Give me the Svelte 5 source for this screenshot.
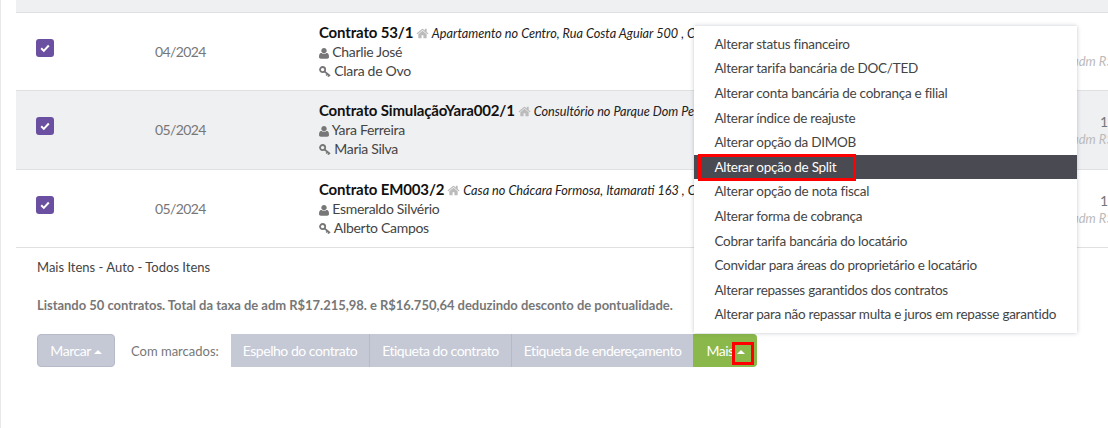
<script lang="ts">
	const rows = [
		{ date: '04/2024', title: 'Contrato 53/1', place: 'Apartamento no Centro, Rua Costa Aguiar 500 , Centro', owner: 'Charlie José', tenant: 'Clara de Ovo', value: '' },
		{ date: '05/2024', title: 'Contrato SimulaçãoYara002/1', place: 'Consultório no Parque Dom Pedro II, Rua das Flores 20 , Centro', owner: 'Yara Ferreira', tenant: 'Maria Silva', value: '1' },
		{ date: '05/2024', title: 'Contrato EM003/2', place: 'Casa no Chácara Formosa, Itamarati 163 , Centro', owner: 'Esmeraldo Silvério', tenant: 'Alberto Campos', value: '1' }
	];

	const actions = ['Espelho do contrato', 'Etiqueta do contrato', 'Etiqueta de endereçamento'];

	const menu = [
		'Alterar status financeiro',
		'Alterar tarifa bancária de DOC/TED',
		'Alterar conta bancária de cobrança e filial',
		'Alterar índice de reajuste',
		'Alterar opção da DIMOB',
		'Alterar opção de Split',
		'Alterar opção de nota fiscal',
		'Alterar forma de cobrança',
		'Cobrar tarifa bancária do locatário',
		'Convidar para áreas do proprietário e locatário',
		'Alterar repasses garantidos dos contratos',
		'Alterar para não repassar multa e juros em repasse garantido'
	];
</script>

<div class="page">
	<div class="strip"></div>

	{#each rows as row, i}
		<div class="row" class:alt={i === 1}>
			<div class="check">
				<svg viewBox="0 0 18 18" width="18" height="18">
					<rect width="18" height="18" rx="3" fill="#6b4fa0" />
					<path d="M5.2 9.3l2.6 2.6 5-5.4" fill="none" stroke="#fff" stroke-width="2" />
				</svg>
			</div>
			<div class="date">{row.date}</div>
			<div class="info">
				<div class="title">
					<b>{row.title}</b>
					<svg class="home" viewBox="0 0 1792 1792" width="13" height="13">
						<path d="M1472 992v480q0 26-19 45t-45 19h-384v-384h-256v384h-384q-26 0-45-19t-19-45v-480q0-1 .5-3t.5-3l575-474 575 474q1 2 1 6zm223-69l-62 74q-8 9-21 11h-3q-13 0-21-7l-692-577-692 577q-12 8-24 7-13-2-21-11l-62-74q-8-10-7-23.5t11-21.5l719-599q32-26 76-26t76 26l244 204v-195q0-14 9-23t23-9h192q14 0 23 9t9 23v408l219 182q10 8 11 21.5t-7 23.5z" />
					</svg>
					<i>{row.place}</i>
				</div>
				<div class="person">
					<svg viewBox="0 0 1408 1792" width="10" height="13">
						<path d="M1408 1531q0 120-73 189.5t-194 69.5h-874q-121 0-194-69.5t-73-189.5q0-53 3.5-103.5t14-109 26.5-108.5 43-97.5 62-81 85.5-53.5 111.5-20q9 0 42 21.5t74.5 48 108 48 133.5 21.5 133.5-21.5 108-48 74.5-48 42-21.5q61 0 111.5 20t85.5 53.5 62 81 43 97.5 26.5 108.5 14 109 3.5 103.5zm-320-893q0 159-112.5 271.5t-271.5 112.5-271.5-112.5-112.5-271.5 112.5-271.5 271.5-112.5 271.5 112.5 112.5 271.5z" />
					</svg>
					{row.owner}
				</div>
				<div class="person">
					<svg viewBox="0 0 12 12" width="12" height="12">
						<circle cx="3.6" cy="3.6" r="2.6" fill="none" stroke="#777" stroke-width="1.8" />
						<path d="M5.5 5.5l5.6 4.4M8.4 7.9l-1.2 1.5M10 9.2l-1 1.4" fill="none" stroke="#777" stroke-width="1.6" />
					</svg>
					{row.tenant}
				</div>
			</div>
			<div class="money">
				<span class="val">{row.value}</span>
				<span class="adm">adm R$</span>
			</div>
		</div>
	{/each}

	<p class="more">Mais Itens - Auto - Todos Itens</p>
	<p class="total">Listando 50 contratos. Total da taxa de adm R$17.215,98. e R$16.750,64 deduzindo desconto de pontualidade.</p>

	<div class="toolbar">
		<button class="btn marcar">Marcar <span class="caret"></span></button>
		<span class="label">Com marcados:</span>
		<div class="group">
			{#each actions as action}
				<button class="btn">{action}</button>
			{/each}
			<div class="dropdown">
				<button class="btn mais">Mais <span class="caret mark"></span></button>
				<ul class="menu">
					{#each menu as item, i}
						<li class:active={i === 5}>
							{item}
							{#if i === 5}<span class="redbox"></span>{/if}
						</li>
					{/each}
				</ul>
			</div>
		</div>
	</div>
</div>

<style>
	:global(body) {
		margin: 0;
		background: #fff;
	}
	.page {
		height: 428px;
		overflow: hidden;
		box-sizing: border-box;
		padding-left: 15px;
		border-left: 1px solid #e8e8e8;
		font-family: Lato, sans-serif;
		font-size: 14px;
		color: #444;
	}
	.strip {
		height: 12px;
		background: #eff0f2;
		border-bottom: 1px solid #dfe0e2;
	}
	.row {
		display: grid;
		grid-template-columns: 139px 164px 1fr 36px;
		height: 77px;
		border-bottom: 1px solid #dfe0e2;
		overflow: hidden;
	}
	.row.alt {
		background: #eff0f2;
		height: 78px;
	}
	.check {
		padding: 26px 0 0 20px;
	}
	.check svg {
		display: block;
	}
	.date {
		padding-top: 30px;
		color: #777;
		font-size: 14px;
		letter-spacing: -0.6px;
		line-height: 17px;
	}
	.info {
		padding-top: 8px;
		min-width: 0;
		overflow: hidden;
		white-space: nowrap;
	}
	.title {
		line-height: 22px;
		height: 21px;
		color: #222;
		font-size: 12.7px;
		font-style: italic;
	}
	.title b {
		font-size: 15px;
		font-style: normal;
		font-weight: 700;
		letter-spacing: -0.15px;
		color: #111;
	}
	.home {
		fill: #bbb;
		vertical-align: -2px;
	}
	.person {
		line-height: 19px;
		height: 19px;
		color: #444;
		letter-spacing: -0.3px;
	}
	.person svg {
		fill: #777;
		vertical-align: -2px;
	}
	.money {
		display: flex;
		flex-direction: column;
		padding-top: 22px;
		overflow: hidden;
		white-space: nowrap;
	}
	.val {
		align-self: flex-end;
		height: 17px;
		line-height: 17px;
		color: #777;
	}
	.adm {
		line-height: 19px;
		font-size: 13px;
		font-style: italic;
		color: #bbb;
	}
	.more {
		margin: 11px 0 0 21px;
		line-height: 17px;
		font-size: 13px;
		color: #444;
	}
	.total {
		margin: 21px 0 0 21px;
		line-height: 17px;
		font-size: 13px;
		letter-spacing: -0.03px;
		font-weight: 700;
		color: #777;
	}
	.toolbar {
		display: flex;
		align-items: center;
		margin: 20px 0 0 21px;
	}
	.btn {
		font: inherit;
		height: 33px;
		padding: 0 12px;
		color: #fff;
		background: #c5c9d5;
		border: 0;
		border-left: 1px solid #b6bac8;
		letter-spacing: -0.47px;
		white-space: nowrap;
	}
	.marcar {
		width: 78px;
		padding: 0;
		border: 1px solid #b6bac8;
		border-radius: 4px;
	}
	.label {
		margin: 0 12px 0 16px;
		color: #777;
		font-size: 13px;
	}
	.group {
		display: flex;
	}
	.group > .btn:first-child {
		border-left: 0;
	}
	.dropdown {
		position: relative;
	}
	.mais {
		display: block;
		width: 64px;
		padding: 0 0 0 13px;
		text-align: left;
		background: #8ab84a;
		border-left: 0;
		border-radius: 0 4px 4px 0;
		position: relative;
	}
	.caret {
		display: inline-block;
		vertical-align: 2px;
		border: 4px solid transparent;
		border-top: 0;
		border-bottom-color: #fff;
	}
	.mark::after {
		content: '';
		position: absolute;
		left: 39px;
		top: 8px;
		width: 16px;
		height: 17px;
		border: 3px solid #f00;
	}
	.menu {
		position: absolute;
		left: 1px;
		bottom: 34px;
		z-index: 5;
		margin: 0;
		padding: 6px 0;
		width: 383px;
		box-sizing: border-box;
		list-style: none;
		background: #fff;
		box-shadow: 0 0 4px rgba(60, 70, 100, 0.3);
		font-size: 13.5px;
		letter-spacing: -0.25px;
		color: #444;
	}
	.menu li {
		position: relative;
		height: 24.6px;
		line-height: 24.6px;
		padding-left: 20px;
		white-space: nowrap;
	}
	.menu li.active {
		background: #4a4a52;
		color: #fff;
	}
	.redbox {
		position: absolute;
		left: 4px;
		top: -1px;
		width: 152px;
		height: 21px;
		border: 3px solid #f00;
	}
</style>
